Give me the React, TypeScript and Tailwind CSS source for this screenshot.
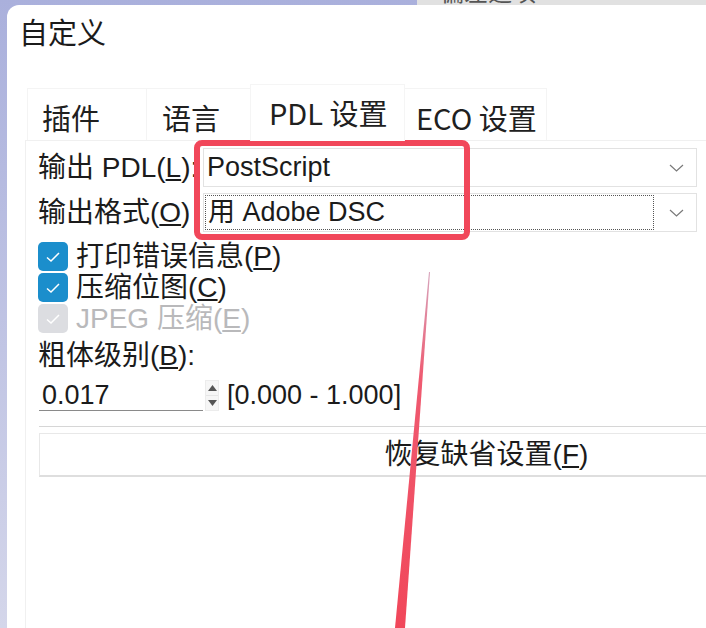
import React from "react";

const Chevron: React.FC = () => (
  <svg width="15" height="8" viewBox="0 0 15 8" fill="none">
    <path d="M1 1 L7.5 7 L14 1" stroke="#7a7a7a" strokeWidth="1.2" />
  </svg>
);

const Check: React.FC<{ disabled?: boolean }> = ({ disabled }) => (
  <div
    className={`w-[30px] h-[29px] -ml-px rounded-[5px] flex items-center justify-center shrink-0 ${
      disabled ? "bg-[#dcdde1]" : "bg-[#1b8ecc]"
    }`}
  >
    <svg width="16" height="12" viewBox="0 0 16 12" fill="none">
      <path d="M2 6.5 L6 10 L14 2" stroke="white" strokeWidth="1.5" />
    </svg>
  </div>
);

const App: React.FC = () => {
  return (
    <div className="w-[706px] h-[628px] overflow-hidden relative flex flex-col bg-gradient-to-b from-[#aab0dc] to-[#d4d6ea] font-['Liberation_Sans','Noto_Sans_CJK_SC',sans-serif] text-[#1b1b1b]">
      {/* window behind */}
      <div className="h-[5px] flex shrink-0">
        <div className="flex-1" />
        <div className="w-[289px] bg-[#e1e1e1] overflow-hidden">
          <div className="text-[24px] leading-none -mt-[21px] ml-[23px] text-[#555] font-['Noto_Sans_CJK_SC',sans-serif]">
            偏差选项
          </div>
        </div>
      </div>

      <div className="flex flex-1 min-h-0">
        <div className="w-[7px] shrink-0" />
        <div className="flex-1 bg-white rounded-tl-[12px] flex flex-col min-w-0 overflow-hidden">
          <div className="pt-[12px] pl-[12px] text-[29px] leading-none font-['Noto_Sans_CJK_SC',sans-serif]">
            自定义
          </div>

          {/* tabs */}
          <div className="mt-[38px] ml-[20px] h-[56px] flex items-end text-[29px] leading-none font-['Noto_Sans_CJK_SC',sans-serif] text-[#202020] relative z-10">
            <div className="w-[119px] h-[52px] pt-[14px] pl-[14px] border-t border-l border-[#f4f4f4]">插件</div>
            <div className="w-[104px] h-[52px] pt-[14px] pl-[15px] border-t border-l border-[#f4f4f4]">语言</div>
            <div className="w-[155px] h-[57px] -mb-px pt-[13px] pl-[18px] bg-white border-t border-l border-r border-[#f5f5f5]">
              PDL 设置
            </div>
            <div className="w-[142px] h-[52px] pt-[14px] pl-[11px] border-t border-r border-[#f4f4f4]">ECO 设置</div>
          </div>

          {/* panel */}
          <div className="ml-[18px] flex-1 border-l border-t border-[#f0f0f0] pl-[13px] flex flex-col overflow-hidden text-[28px] leading-none">
            <div className="mt-[7px] h-[39px] flex items-center shrink-0">
              <div className="w-[165px] shrink-0 -ml-px">
                输出 PDL(<span className="underline underline-offset-2">L</span>):
              </div>
              <div className="flex-1 mr-[9px] h-full border border-[#e2e2e2] flex items-center justify-between pl-[3px] pr-[12px]">
                <span className="text-[27px]">PostScript</span>
                <Chevron />
              </div>
            </div>

            <div className="mt-[6px] h-[39px] flex items-center shrink-0">
              <div className="w-[165px] shrink-0 -ml-px">
                输出格式(<span className="underline underline-offset-2">O</span>)
              </div>
              <div className="flex-1 mr-[9px] h-full border border-[#e2e2e2] flex items-center pr-[12px]">
                <div className="ml-px w-[449px] h-[35px] border border-dotted border-[#555] flex items-center pl-[2px] text-[27px]">
                  用 Adobe DSC
                </div>
                <div className="ml-auto">
                  <Chevron />
                </div>
              </div>
            </div>

            <div className="mt-[10px] flex flex-col gap-[2px] shrink-0">
              <div className="h-[29px] flex items-center">
                <Check />
                <span className="ml-[8px]">
                  打印错误信息(<span className="underline underline-offset-2">P</span>)
                </span>
              </div>
              <div className="h-[29px] flex items-center">
                <Check />
                <span className="ml-[8px]">
                  压缩位图(<span className="underline underline-offset-2">C</span>)
                </span>
              </div>
              <div className="h-[29px] flex items-center text-[#b9b9bb]">
                <Check disabled />
                <span className="ml-[8px]">
                  JPEG 压缩(<span className="underline underline-offset-2">E</span>)
                </span>
              </div>
            </div>

            <div className="mt-[7px] h-[31px] flex items-center shrink-0 -ml-px">
              粗体级别(<span className="underline underline-offset-2">B</span>):
            </div>

            <div className="mt-[9px] h-[31px] flex items-stretch shrink-0">
              <div className="w-[164px] border-b border-[#8a8a8a] flex items-center pl-[3px] text-[27px]">0.017</div>
              <div className="ml-[2px] w-[14px] flex flex-col bg-[#f6f6f6] border border-[#ececec]">
                <div className="flex-1 flex items-center justify-center border-b border-[#e6e6e6]">
                  <svg width="9" height="6" viewBox="0 0 9 6">
                    <path d="M4.5 0 L9 6 L0 6 Z" fill="#555" />
                  </svg>
                </div>
                <div className="flex-1 flex items-center justify-center">
                  <svg width="9" height="6" viewBox="0 0 9 6">
                    <path d="M0 0 L9 0 L4.5 6 Z" fill="#555" />
                  </svg>
                </div>
              </div>
              <div className="ml-[8px] flex items-center text-[27px]">[0.000 - 1.000]</div>
            </div>

            <div className="mt-[15px] h-px bg-[#d6d6d6] shrink-0" />

            <div className="mt-[6px] h-[44px] w-[895px] shrink-0 border border-[#e8e8e8] border-b-2 border-b-[#dedede] flex items-center justify-center">
              恢复缺省设置(<span className="underline underline-offset-2">F</span>)
            </div>
          </div>
        </div>
      </div>

      {/* annotation */}
      <div className="absolute left-[194px] top-[140px] w-[276px] h-[100px] border-[6px] border-[#f1475a] rounded-[8px] pointer-events-none" />
      <svg className="absolute inset-0 pointer-events-none" width="706" height="628" viewBox="0 0 706 628">
        <defs>
          <linearGradient id="arrow" x1="0" y1="0" x2="0" y2="1">
            <stop offset="0" stopColor="#d7a3bb" />
            <stop offset="0.3" stopColor="#ef5a70" />
            <stop offset="1" stopColor="#f1475a" />
          </linearGradient>
        </defs>
        <polygon points="429,272 430,272 405,628 395,628" fill="url(#arrow)" />
      </svg>
    </div>
  );
};

export default App;
